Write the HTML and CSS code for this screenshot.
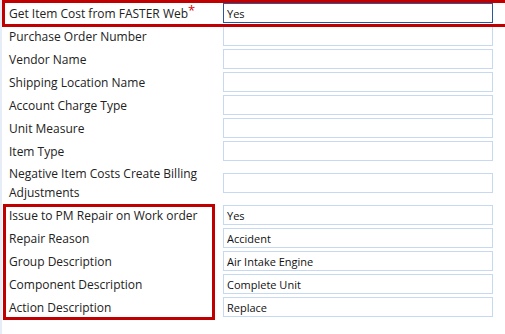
FILE: index.html
```html
<!DOCTYPE html>
<html lang="en">
<head>
    <meta charset="UTF-8">
    <meta name="viewport" content="width=device-width, initial-scale=1.0">
    <title>Item Cost</title>
    <link rel="stylesheet" href="styles.css">
</head>
<body>
    <div class="form">
        <div class="group group-top">
            <div class="row">
                <label class="label">Get Item Cost from FASTER Web<span class="required">*</span></label>
                <input class="field active" type="text" value="Yes" readonly>
            </div>
        </div>
        <div class="row">
            <label class="label">Purchase Order Number</label>
            <input class="field" type="text" readonly>
        </div>
        <div class="row">
            <label class="label">Vendor Name</label>
            <input class="field" type="text" readonly>
        </div>
        <div class="row">
            <label class="label">Shipping Location Name</label>
            <input class="field" type="text" readonly>
        </div>
        <div class="row">
            <label class="label">Account Charge Type</label>
            <input class="field" type="text" readonly>
        </div>
        <div class="row">
            <label class="label">Unit Measure</label>
            <input class="field" type="text" readonly>
        </div>
        <div class="row">
            <label class="label">Item Type</label>
            <input class="field" type="text" readonly>
        </div>
        <div class="row tall">
            <label class="label">Negative Item Costs Create Billing Adjustments</label>
            <input class="field" type="text" readonly>
        </div>
        <div class="group group-repair">
            <div class="row">
                <label class="label">Issue to PM Repair on Work order</label>
                <input class="field" type="text" value="Yes" readonly>
            </div>
            <div class="row">
                <label class="label">Repair Reason</label>
                <input class="field" type="text" value="Accident" readonly>
            </div>
            <div class="row">
                <label class="label">Group Description</label>
                <input class="field" type="text" value="Air Intake Engine" readonly>
            </div>
            <div class="row">
                <label class="label">Component Description</label>
                <input class="field" type="text" value="Complete Unit" readonly>
            </div>
            <div class="row">
                <label class="label">Action Description</label>
                <input class="field" type="text" value="Replace" readonly>
            </div>
        </div>
    </div>
</body>
</html>
```

FILE: styles.css
```css
* {
    margin: 0;
    padding: 0;
    box-sizing: border-box;
}
body {
    font-family: "Open Sans", Arial, sans-serif;
    background-color: white;
    color: #222;
}
.form {
    width: 505px;
    height: 334px;
    border-left: 2px solid #e6edf7;
    padding: 3px 0 0 6px;
    display: flex;
    flex-direction: column;
    gap: 3px;
}
.group {
    position: relative;
    display: flex;
    flex-direction: column;
    gap: 3px;
}
/* red annotation frames drawn over the rows */
.group::after {
    content: "";
    position: absolute;
    border: 3px solid #c00000;
    pointer-events: none;
}
.group-top::after {
    top: -3px;
    bottom: -4px;
    left: -6px;
    width: 501px;
}
.group-repair::after {
    top: -1px;
    bottom: -3px;
    left: -5px;
    width: 206px;
}
.row {
    display: grid;
    grid-template-columns: 215px 270px;
    align-items: center;
    min-height: 20px;
}
.row.tall {
    height: 38px;
}
.label {
    font-size: 12px;
    line-height: 19px;
    padding-right: 22px;
    padding-left: 1px;
}
.required {
    color: #e00000;
    vertical-align: top;
    font-size: 13px;
    line-height: 12px;
}
.field {
    height: 20px;
    width: 270px;
    border: 1px solid #c6d9f1;
    background: white;
    padding: 0 3px;
    font-family: "Open Sans", Arial, sans-serif;
    font-size: 11px;
    color: #111;
    outline: none;
}
.field.active {
    border-color: #2b579a;
}
```
